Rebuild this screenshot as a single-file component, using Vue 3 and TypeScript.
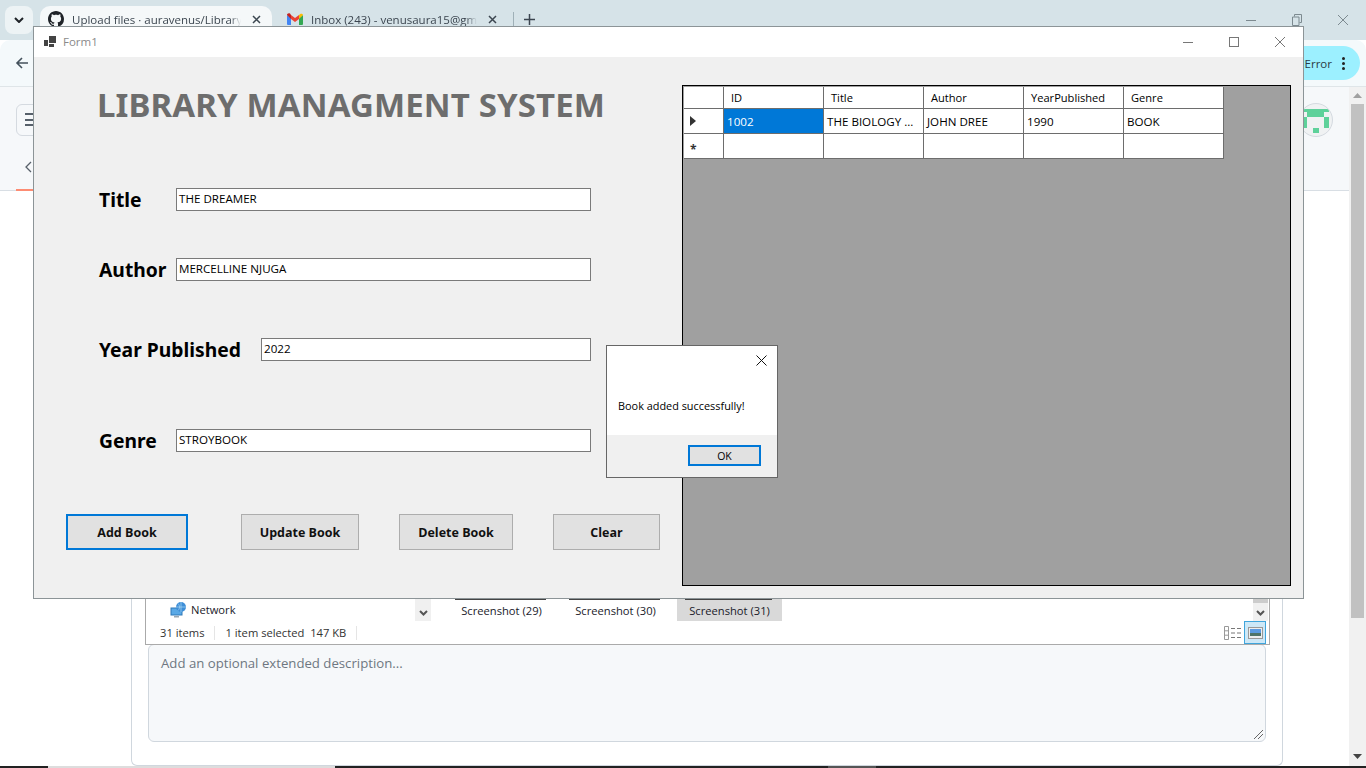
<script setup lang="ts">
const cols = ['ID', 'Title', 'Author', 'YearPublished', 'Genre']
const row = ['1002', 'THE BIOLOGY ...', 'JOHN DREE', '1990', 'BOOK']
const fields = [
  { label: 'Title', value: 'THE DREAMER', cls: 'f1' },
  { label: 'Author', value: 'MERCELLINE NJUGA', cls: 'f2' },
  { label: 'Year Published', value: '2022', cls: 'f3' },
  { label: 'Genre', value: 'STROYBOOK', cls: 'f4' },
]
const buttons = ['Add Book', 'Update Book', 'Delete Book', 'Clear']
</script>

<template>
  <div class="screen">
    <div class="tabstrip">
      <div class="tabsearch"><svg width="10" height="6" viewBox="0 0 10 6"><path d="M1 1l4 4 4-4" fill="none" stroke="#1f2328" stroke-width="2"/></svg></div>
      <div class="tab active">
        <svg width="16" height="16" viewBox="0 0 16 16"><path fill="#1f2328" d="M8 0C3.58 0 0 3.58 0 8c0 3.54 2.29 6.53 5.47 7.59.4.07.55-.17.55-.38 0-.19-.01-.82-.01-1.49-2.01.37-2.53-.49-2.69-.94-.09-.23-.48-.94-.82-1.13-.28-.15-.68-.52-.01-.53.63-.01 1.08.58 1.23.82.72 1.21 1.87.87 2.33.66.07-.52.28-.87.51-1.07-1.78-.2-3.64-.89-3.64-3.95 0-.87.31-1.59.82-2.15-.08-.2-.36-1.02.08-2.12 0 0 .67-.21 2.2.82.64-.18 1.32-.27 2-.27s1.36.09 2 .27c1.53-1.04 2.2-.82 2.2-.82.44 1.1.16 1.92.08 2.12.51.56.82 1.27.82 2.15 0 3.07-1.87 3.75-3.65 3.95.29.25.54.73.54 1.48 0 1.07-.01 1.93-.01 2.2 0 .21.15.46.55.38A8.01 8.01 0 0 0 16 8c0-4.42-3.58-8-8-8z"/></svg>
        <span class="tabtext">Upload files · auravenus/Library</span>
        <svg class="tabx" width="9" height="9" viewBox="0 0 9 9"><path d="M1 1l7 7M8 1L1 8" stroke="#3c4650" stroke-width="1.500" fill="none"/></svg>
      </div>
      <div class="tab second">
        <svg width="16" height="12" viewBox="0 0 16 12"><path fill="#4285f4" d="M0 2v9a1 1 0 0 0 1 1h3V5z"/><path fill="#34a853" d="M12 5v7h3a1 1 0 0 0 1-1V2z"/><path fill="#ea4335" d="M4 6V2l4 3 4-3v4L8 9z"/><path fill="#c5221f" d="M0 2c0-1.5 1.7-2.4 3-1.400L4 2v4z"/><path fill="#fbbc04" d="M12 2l1-.8c1.300-1 3-.1 3 .8L12 6z"/></svg>
        <span class="tabtext">Inbox (243) - venusaura15@gm</span>
        <svg class="tabx" width="9" height="9" viewBox="0 0 9 9"><path d="M1 1l7 7M8 1L1 8" stroke="#3c4650" stroke-width="1.500" fill="none"/></svg>
      </div>
      <span class="tabsep"></span>
      <svg class="tabplus" width="11" height="11" viewBox="0 0 11 11"><path d="M5.500 0v11M0 5.500h11" stroke="#3c4650" stroke-width="1.500" fill="none"/></svg>
      <div class="winctl">
        <svg width="12" height="12" viewBox="0 0 12 12"><path d="M1 6.500h10" stroke="#7d8a90" fill="none"/></svg>
        <svg width="12" height="12" viewBox="0 0 12 12"><path d="M3.500 2.500V.5h7v8h-2M1.500 3h6.500v8.500H1.500z" stroke="#7d8a90" fill="none"/></svg>
        <svg width="12" height="12" viewBox="0 0 12 12"><path d="M1 1l10 10M11 1L1 11" stroke="#7d8a90" fill="none"/></svg>
      </div>
    </div>

    <div class="toolbar">
      <svg class="back" width="14" height="14" viewBox="0 0 14 14"><path d="M13 7H2M7 2L2 7l5 5" fill="none" stroke="#44515c" stroke-width="1.600"/></svg>
      <div class="errpill"><span>Error</span><span class="dots"><i></i><i></i><i></i></span></div>
    </div>

    <div class="body">
      <div class="page">
        <div class="pagehead">
          <div class="menubtn"><span></span><span></span><span></span></div>
          <div class="avatar">
            <svg width="34" height="34" viewBox="0 0 34 34"><rect x="4" y="6" width="26" height="3" fill="#5ed19a"/><rect x="8" y="9" width="17" height="5" fill="#5ed19a"/><rect x="4" y="14" width="4" height="11" fill="#5ed19a"/><rect x="25" y="14" width="5" height="11" fill="#5ed19a"/><rect x="14" y="25" width="6" height="5" fill="#5ed19a"/></svg>
          </div>
        </div>
        <div class="subnav">
          <svg width="8" height="12" viewBox="0 0 8 12"><path d="M7 1L2 6l5 5" fill="none" stroke="#57606a" stroke-width="1.300"/></svg>
          <span class="redtab"></span>
        </div>
        <div class="card">
          <div class="explorer">
            <div class="exrow">
              <div class="netcell">
                <svg width="17" height="16" viewBox="0 0 17 16"><rect x="1" y="6" width="11" height="7" fill="#5aa9e6" stroke="#2f78b8"/><circle cx="11" cy="5" r="5" fill="#3f8fd8"/><path d="M8 1.500c2 2 2 5 0 7M11 0v10M6 5h10" stroke="#a9d8f5" fill="none" stroke-width=".7"/><rect x="4" y="14" width="5" height="1.500" fill="#9aa7b2"/></svg>
                <span>Network</span>
              </div>
              <div class="scrollcol"><svg width="9" height="6" viewBox="0 0 9 6"><path d="M1 1l3.500 3.500L8 1" fill="none" stroke="#555" stroke-width="2"/></svg></div>
              <div class="shots">
                <span class="shot"><b class="shade"></b>Screenshot (29)</span>
                <span class="shot"><b class="shade"></b>Screenshot (30)</span>
                <span class="shot sel"><b class="shade"></b>Screenshot (31)</span>
              </div>
              <div class="scrollcol right"><svg width="9" height="6" viewBox="0 0 9 6"><path d="M1 1l3.500 3.500L8 1" fill="none" stroke="#555" stroke-width="2"/></svg></div>
            </div>
            <div class="status">
              <span>31 items</span><i class="stsep"></i>
              <span>1 item selected&nbsp;&nbsp;147 KB</span><i class="stsep"></i>
              <span class="viewicons">
                <svg width="17" height="14" viewBox="0 0 17 14"><path d="M.5.500h4v13h-4zM.5 4.800h4M.5 9.200h4" fill="none" stroke="#999"/><path d="M7 2.500h4M13 2.500h4M7 7h4M13 7h4M7 11.500h4M13 11.500h4" stroke="#777"/></svg>
                <span class="viewon"><svg width="15" height="12" viewBox="0 0 15 12"><rect x=".5" y=".5" width="14" height="11" fill="#eee" stroke="#999"/><rect x="2" y="2" width="11" height="4" fill="#5c9be0"/><rect x="2" y="6" width="11" height="3" fill="#4f7468"/></svg></span>
              </span>
            </div>
          </div>
          <div class="descbox">
            <span class="placeholder">Add an optional extended description...</span>
            <svg class="grip" width="9" height="9" viewBox="0 0 9 9"><path d="M0 9L9 0M4 9l5-5" stroke="#666" fill="none"/></svg>
          </div>
        </div>
      </div>
      <div class="pagescroll">
        <svg width="9" height="5" viewBox="0 0 9 5"><path d="M4.500 0L9 5H0z" fill="#a0a0a0"/></svg>
        <div class="thumb"></div>
        <svg class="down" width="9" height="5" viewBox="0 0 9 5"><path d="M0 0h9L4.500 5z" fill="#444"/></svg>
      </div>
    </div>
    <div class="taskbar"><span class="tb1"></span><span class="tb2"></span></div>

    <div class="form1">
      <div class="titlebar">
        <svg width="12" height="12" viewBox="0 0 12 12"><path fill="#444" d="M0 4h4v6H0zM5 0h7v7H5zM5 8h5v3H5z"/></svg>
        <span class="caption">Form1</span>
        <div class="fctl">
          <svg width="12" height="12" viewBox="0 0 12 12"><path d="M1 6.500h10" stroke="#777" fill="none"/></svg>
          <svg width="12" height="12" viewBox="0 0 12 12"><rect x="1.500" y="1.500" width="9" height="9" stroke="#777" fill="none"/></svg>
          <svg width="12" height="12" viewBox="0 0 12 12"><path d="M1 1l10 10M11 1L1 11" stroke="#777" fill="none"/></svg>
        </div>
      </div>
      <div class="client">
        <div class="left">
          <h1>LIBRARY MANAGMENT SYSTEM</h1>
          <div v-for="f in fields" :key="f.label" class="field" :class="f.cls">
            <label>{{ f.label }}</label>
            <div class="input">{{ f.value }}</div>
          </div>
          <div class="btns">
            <button v-for="(b, i) in buttons" :key="b" :class="['btn', 'b' + i]">{{ b }}</button>
          </div>
        </div>
        <div class="grid">
          <div class="tbl">
            <div class="cell corner"></div>
            <div v-for="c in cols" :key="c" class="cell head">{{ c }}</div>
            <div class="cell rowh r1"><svg width="6" height="10" viewBox="0 0 6 10"><path d="M0 0l6 5-6 5z" fill="#333"/></svg></div>
            <div v-for="(v, i) in row" :key="i" class="cell r1" :class="{ selcell: i === 0 }">{{ v }}</div>
            <div class="cell rowh r2"><span class="star">*</span></div>
            <div v-for="i in 5" :key="'e' + i" class="cell r2"></div>
          </div>
        </div>
      </div>
    </div>

    <div class="dialog">
      <div class="dtop">
        <svg class="dx" width="11" height="11" viewBox="0 0 11 11"><path d="M.5.500l10 10M10.500.500l-10 10" stroke="#111" fill="none"/></svg>
        <p>Book added successfully!</p>
      </div>
      <div class="dbot"><button class="okbtn">OK</button></div>
    </div>
  </div>
</template>

<style>
html, body { margin: 0; padding: 0; background: #fff; overflow: hidden; }
</style>

<style scoped>
.screen { position: relative; width: 1366px; height: 768px; overflow: hidden; background: #fff; font-family: "Open Sans", "Noto Sans", sans-serif; font-size: 12px; color: #1f2328; display: flex; flex-direction: column; }
.tabstrip { height: 40px; background: #d6e3e8; display: flex; align-items: flex-start; padding: 6px 0 0 5px; box-sizing: border-box; flex: none; position: relative; }
.tabsearch { width: 28px; height: 28px; background: #edf3f5; border-radius: 8px; display: flex; align-items: center; justify-content: center; margin-right: 7px; }
.tab { width: 232px; height: 34px; display: flex; align-items: center; padding: 0 11px 8px 8px; box-sizing: border-box; gap: 8px; font-size: 11.5px; color: #3c4650; flex: none; }
.tab.active { background: #f5f8f9; border-radius: 10px 10px 0 0; }
.tab.second { width: 240px; padding: 0 15px 8px 15px; }
.tabtext { flex: 1; min-width: 0; white-space: nowrap; overflow: hidden; -webkit-mask-image: linear-gradient(to right, #000 calc(100% - 14px), transparent calc(100% - 3px)); mask-image: linear-gradient(to right, #000 calc(100% - 14px), transparent calc(100% - 3px)); }
.tabx { flex: none; }
.tabsep { width: 1px; height: 15px; background: #9fb0b7; margin: 6px 0 0 1px; }
.tabplus { margin: 8px 0 0 10px; }
.winctl { position: absolute; right: 17px; top: 14px; display: flex; gap: 34px; }
.toolbar { height: 46px; background: #f4f9fb; border-bottom: 1px solid #dfe5e8; display: flex; align-items: center; justify-content: space-between; padding-left: 15px; border-radius: 10px 10px 0 0; flex: none; }
.errpill { width: 73px; height: 34px; background: #9cf0ff; box-sizing: border-box; margin-right: 6px; border-radius: 17px; display: flex; align-items: center; justify-content: flex-end; padding-right: 15px; gap: 10px; font-size: 11.5px; color: #2b3a44; }
.dots { display: flex; flex-direction: column; gap: 2px; }
.dots i { width: 3px; height: 3px; border-radius: 50%; background: #222; display: block; }
.body { flex: 1; display: flex; min-height: 0; }
.page { flex: 1; min-width: 0; background: #fff; display: flex; flex-direction: column; }
.pagehead { height: 65px; display: flex; align-items: center; justify-content: space-between; padding: 0 16px 0 16px; background: #f6f8fa; flex: none; }
.menubtn { width: 32px; height: 32px; border: 1px solid #d5dae0; border-radius: 6px; background: #f6f8fa; display: flex; flex-direction: column; justify-content: center; gap: 3.5px; padding: 0 0 0 8px; box-sizing: border-box; }
.menubtn span { height: 2px; width: 10px; background: #57606a; }
.avatar { width: 34px; height: 34px; border-radius: 50%; border: 1px solid #d5dae0; background: #f0f2f3; overflow: hidden; box-sizing: border-box; }
.avatar svg { display: block; margin: -1px; }
.subnav { background: #f6f8fa; border-bottom: 1px solid #d8dee4; padding: 0 0 8px 24px; box-sizing: content-box; display: flex; align-items: center; position: relative; flex: none; height: 30px; }
.redtab { position: absolute; left: 16px; bottom: -1px; width: 20px; height: 2px; background: #fd8c73; }
.card { margin-left: 131px; width: 1152px; flex: 1; min-height: 0; border: 1px solid #d0d7de; border-top: none; border-radius: 0 0 6px 6px; box-sizing: border-box; display: flex; flex-direction: column; justify-content: flex-end; padding: 0 16px 23px 16px; }
.explorer { margin: 0 -4px -1px -3px; box-sizing: border-box; border: 1px solid #aaa; border-top: none; background: #fff; position: relative; z-index: 1; }
.exrow { height: 25px; display: flex; align-items: stretch; }
.netcell { width: 269px; display: flex; align-items: center; padding: 2px 0 0 24px; gap: 4px; box-sizing: border-box; font-size: 11.2px; color: #1a1a2a; }
.scrollcol { width: 16px; background: #f0f0f0; display: flex; align-items: flex-end; justify-content: center; padding-bottom: 5px; box-sizing: border-box; }
.scrollcol.right { margin-left: auto; margin-right: 1px; width: 15px; background: linear-gradient(#ccc 7px, #f0f0f0 7px); }
.shots { display: flex; margin-left: 16px; font-size: 11.2px; color: #1a1a2a; }
.shot { width: 109px; margin-right: 5px; display: flex; align-items: center; justify-content: center; position: relative; padding-top: 3px; box-sizing: border-box; }
.shot.sel { background: #d9d9d9; width: 105px; margin-left: 2px; margin-right: 0; }
.shade { position: absolute; left: 8px; right: 10px; top: 1px; height: 3px; background: #444; }
.status { height: 23px; display: flex; align-items: center; padding-left: 14px; color: #333; position: relative; font-size: 11.2px; }
.stsep { display: block; width: 1px; height: 14px; background: #e5e5e5; margin: 0 10px 0 10px; }
.viewicons { position: absolute; right: 3px; top: 0; height: 23px; display: flex; align-items: center; gap: 3px; }
.viewon { width: 22px; height: 23px; border: 1px solid #3fa5dc; background: #cde8f7; display: flex; align-items: center; justify-content: center; box-sizing: border-box; }
.descbox { height: 98px; position: relative; background: #f6f8fa; border: 1px solid #d0d7de; border-radius: 6px; box-sizing: border-box; padding: 9px 12px; font-size: 13.2px; color: #6e7781; flex: none; }
.grip { position: absolute; right: 2px; bottom: 2px; }
.pagescroll { width: 17px; background: #f1f1f1; display: flex; flex-direction: column; align-items: center; padding-top: 6px; box-sizing: border-box; flex: none; }
.thumb { width: 13px; height: 514px; background: #c1c1c1; margin-top: 6px; }
.down { margin-top: auto; margin-bottom: 7px; }
.taskbar { height: 2px; background: #222; flex: none; position: relative; }
.tb1 { position: absolute; left: 48px; width: 287px; height: 2px; background: #ddd; }
.tb2 { position: absolute; left: 828px; width: 48px; height: 2px; background: #555; }

.form1 { position: absolute; left: 33px; top: 26px; width: 1271px; height: 573px; box-sizing: border-box; border: 1px solid #8c9497; background: #f0f0f0; display: flex; flex-direction: column; z-index: 2; }
.titlebar { height: 30px; background: #fff; display: flex; align-items: center; padding-left: 10px; gap: 7px; flex: none; }
.caption { color: #8a8a8a; font-size: 11.5px; margin-top: -1px; }
.fctl { margin-left: auto; display: flex; gap: 34px; padding-right: 17px; }
.client { flex: 1; display: flex; min-height: 0; position: relative; }
.left { width: 648px; flex: none; display: flex; flex-direction: column; }
h1 { margin: 29px 0 0 63px; height: 37px; line-height: 37px; font-family: "Noto Sans", sans-serif; font-weight: 700; font-size: 33px; letter-spacing: .12px; color: #6d6d6d; white-space: nowrap; }
.field { display: flex; align-items: center; padding-left: 65px; height: 24px; }
.field label { font-family: "Noto Sans", sans-serif; font-weight: 700; font-size: 19.3px; color: #000; white-space: nowrap; margin-top: 0; }
.input { height: 23px; box-sizing: border-box; border: 1px solid #7a7a7a; background: #fff; color: #000; font-size: 11.6px; padding-left: 2px; line-height: 20px; margin-left: auto; margin-right: 91px; }
.f1 { margin-top: 64px; } .f1 .input { width: 415px; }
.f2 { margin-top: 46px; } .f2 .input { width: 415px; }
.f3 { margin-top: 56px; } .f3 .input { width: 330px; }
.f4 { margin-top: 67px; } .f4 .input { width: 415px; }
.btns { display: flex; margin-top: 62px; padding-left: 32px; }
.btn { height: 36px; box-sizing: border-box; border: 1px solid #adadad; background: #e1e1e1; font-family: "Open Sans", sans-serif; font-weight: 700; font-size: 12.5px; color: #111; padding: 0; }
.b0 { width: 122px; border: 2px solid #0078d7; }
.b1 { width: 118px; margin-left: 53px; }
.b2 { width: 114px; margin-left: 40px; }
.b3 { width: 107px; margin-left: 40px; }
.grid { position: absolute; left: 648px; top: 28px; width: 609px; height: 501px; box-sizing: border-box; border: 1px solid #000; background: #a0a0a0; }
.tbl { display: grid; grid-template-columns: 40px repeat(5, 100px); grid-template-rows: 22px 25px 25px; width: 540px; background: #fff; margin: 1px 0 0 1px; }
.cell { box-sizing: border-box; border-right: 1px solid #6d6d6d; border-bottom: 1px solid #6d6d6d; padding: 0 3px; display: flex; align-items: center; color: #000; font-size: 11.6px; white-space: nowrap; overflow: hidden; }
.head { padding-left: 7px; font-size: 11.1px; }
.rowh { padding: 0 0 0 6px; }
.selcell { background: #0078d7; color: #fff; }
.star { font-size: 12px; font-weight: 700; margin-top: 6px; color: #333; }

.dialog { position: absolute; left: 606px; top: 345px; width: 172px; height: 133px; box-sizing: border-box; border: 1px solid #666; background: #f0f0f0; display: flex; flex-direction: column; z-index: 3; }
.dtop { height: 89px; background: #fff; position: relative; }
.dx { position: absolute; right: 10px; top: 9px; }
.dtop p { margin: 53px 0 0 11px; position: absolute; font-size: 10.9px; color: #000; white-space: nowrap; line-height: 14px; }
.dbot { flex: 1; position: relative; }
.okbtn { position: absolute; left: 81px; top: 10px; width: 73px; height: 21px; box-sizing: border-box; border: 2px solid #0078d7; background: #e1e1e1; font-family: "Open Sans", sans-serif; font-size: 10.5px; color: #000; padding: 0; }
</style>
